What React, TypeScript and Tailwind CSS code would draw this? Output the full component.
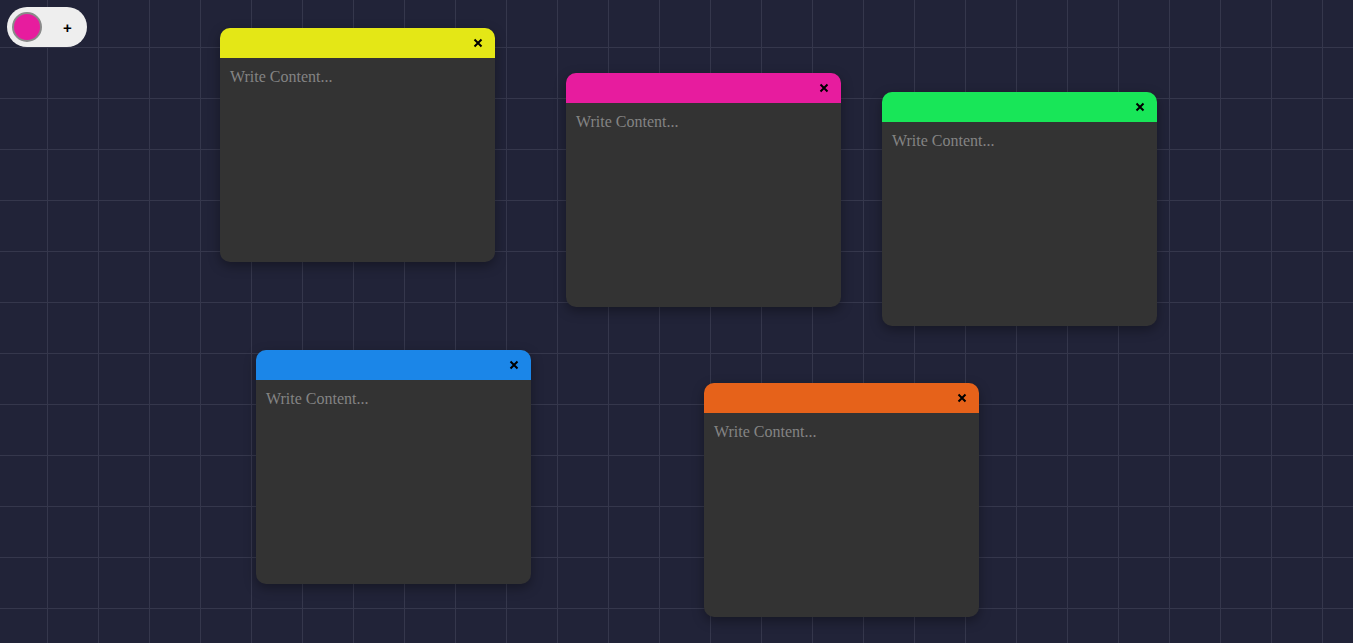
const notes = [
  { id: 1, x: 220, y: 28, color: "bg-[#e4e716]" },
  { id: 2, x: 566, y: 73, color: "bg-[#e71c9e]" },
  { id: 3, x: 882, y: 92, color: "bg-[#18e658]" },
  { id: 4, x: 256, y: 350, color: "bg-[#1b86e8]" },
  { id: 5, x: 704, y: 383, color: "bg-[#e6621a]" },
];

function CloseIcon() {
  return (
    <svg width="10" height="10" viewBox="0 0 10 10" className="text-black">
      <path d="M1.5 1.5 L8.5 8.5 M8.5 1.5 L1.5 8.5" stroke="currentColor" strokeWidth="2" />
    </svg>
  );
}

function Note({ x, y, color }: { x: number; y: number; color: string }) {
  return (
    <div
      className="absolute flex h-[234px] w-[275px] flex-col overflow-hidden rounded-[10px] bg-[#333333] shadow-[0_4px_12px_rgba(0,0,0,0.35)]"
      style={{ left: x, top: y }}
    >
      <div className={`flex h-[30px] shrink-0 items-center justify-end pr-[12px] ${color}`}>
        <CloseIcon />
      </div>
      <textarea
        placeholder="Write Content..."
        className="flex-1 resize-none bg-transparent px-[10px] pt-[9px] font-['Liberation_Serif',serif] text-[16px] leading-[20px] text-[#cccccc] outline-none placeholder:text-[#848484]"
      />
    </div>
  );
}

export default function App() {
  return (
    <div className="relative h-[643px] w-full overflow-hidden bg-[#212338] bg-[linear-gradient(to_right,#35374c_1px,transparent_1px),linear-gradient(to_bottom,#35374c_1px,transparent_1px)] bg-size-[51px_51px] bg-position-[47px_47px]">
      <div className="absolute left-[7px] top-[7px] flex h-[40px] w-[80px] items-center rounded-full bg-[#eeeeee] pl-[5px]">
        <div className="h-[30px] w-[30px] rounded-full border-2 border-[#8a8a8a] bg-[#e71c9e]" />
        <span className="ml-[21px] font-['Liberation_Sans',sans-serif] text-[15px] font-bold leading-none text-black">+</span>
      </div>
      {notes.map((n) => (
        <Note key={n.id} x={n.x} y={n.y} color={n.color} />
      ))}
    </div>
  );
}
